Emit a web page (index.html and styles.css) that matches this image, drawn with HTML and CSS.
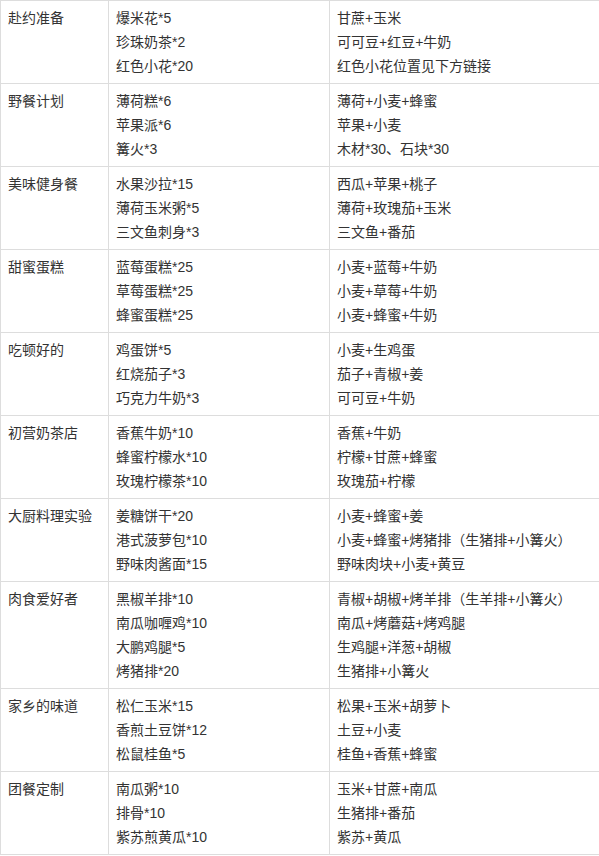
FILE: index.html
```html
<!DOCTYPE html>
<html lang="zh">
<head>
<meta charset="utf-8">
<link rel="stylesheet" href="styles.css">
</head>
<body>
<table class="recipes">
<colgroup><col class="c1"><col class="c2"><col class="c3"></colgroup>
<tbody>
<tr><td>赴约准备</td><td><div>爆米花*5</div><div>珍珠奶茶*2</div><div>红色小花*20</div></td><td><div>甘蔗+玉米</div><div>可可豆+红豆+牛奶</div><div>红色小花位置见下方链接</div></td></tr>
<tr><td>野餐计划</td><td><div>薄荷糕*6</div><div>苹果派*6</div><div>篝火*3</div></td><td><div>薄荷+小麦+蜂蜜</div><div>苹果+小麦</div><div>木材*30、石块*30</div></td></tr>
<tr><td>美味健身餐</td><td><div>水果沙拉*15</div><div>薄荷玉米粥*5</div><div>三文鱼刺身*3</div></td><td><div>西瓜+苹果+桃子</div><div>薄荷+玫瑰茄+玉米</div><div>三文鱼+番茄</div></td></tr>
<tr><td>甜蜜蛋糕</td><td><div>蓝莓蛋糕*25</div><div>草莓蛋糕*25</div><div>蜂蜜蛋糕*25</div></td><td><div>小麦+蓝莓+牛奶</div><div>小麦+草莓+牛奶</div><div>小麦+蜂蜜+牛奶</div></td></tr>
<tr><td>吃顿好的</td><td><div>鸡蛋饼*5</div><div>红烧茄子*3</div><div>巧克力牛奶*3</div></td><td><div>小麦+生鸡蛋</div><div>茄子+青椒+姜</div><div>可可豆+牛奶</div></td></tr>
<tr><td>初营奶茶店</td><td><div>香蕉牛奶*10</div><div>蜂蜜柠檬水*10</div><div>玫瑰柠檬茶*10</div></td><td><div>香蕉+牛奶</div><div>柠檬+甘蔗+蜂蜜</div><div>玫瑰茄+柠檬</div></td></tr>
<tr><td>大厨料理实验</td><td><div>姜糖饼干*20</div><div>港式菠萝包*10</div><div>野味肉酱面*15</div></td><td><div>小麦+蜂蜜+姜</div><div>小麦+蜂蜜+烤猪排（生猪排+小篝火）</div><div>野味肉块+小麦+黄豆</div></td></tr>
<tr><td>肉食爱好者</td><td><div>黑椒羊排*10</div><div>南瓜咖喱鸡*10</div><div>大鹏鸡腿*5</div><div>烤猪排*20</div></td><td><div>青椒+胡椒+烤羊排（生羊排+小篝火）</div><div>南瓜+烤蘑菇+烤鸡腿</div><div>生鸡腿+洋葱+胡椒</div><div>生猪排+小篝火</div></td></tr>
<tr><td>家乡的味道</td><td><div>松仁玉米*15</div><div>香煎土豆饼*12</div><div>松鼠桂鱼*5</div></td><td><div>松果+玉米+胡萝卜</div><div>土豆+小麦</div><div>桂鱼+香蕉+蜂蜜</div></td></tr>
<tr><td>团餐定制</td><td><div>南瓜粥*10</div><div>排骨*10</div><div>紫苏煎黄瓜*10</div></td><td><div>玉米+甘蔗+南瓜</div><div>生猪排+番茄</div><div>紫苏+黄瓜</div></td></tr>
</tbody>
</table>
</body>
</html>
```
FILE: styles.css
```css
html, body {
  margin: 0;
  padding: 0;
  background: #fff;
}
.recipes {
  border-collapse: collapse;
  table-layout: fixed;
  width: 599px;
  font-family: "Liberation Sans", "Noto Sans CJK SC", sans-serif;
  font-size: 14px;
  line-height: 24px;
  color: #333;
}
.recipes .c1 { width: 108px; }
.recipes .c2 { width: 221px; }
.recipes .c3 { width: 270px; }
.recipes td {
  border: 1px solid #ddd;
  padding: 5px 7px;
  vertical-align: top;
  text-align: left;
}
```
